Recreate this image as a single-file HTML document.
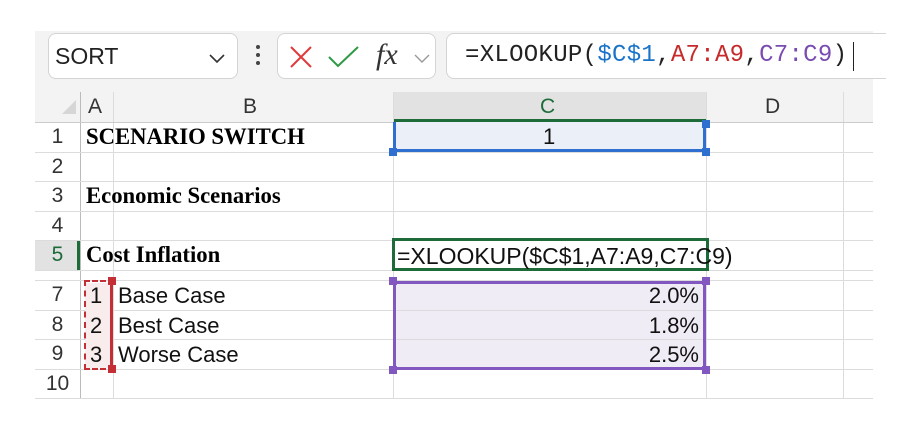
<!DOCTYPE html>
<html><head><style>
*{margin:0;padding:0;box-sizing:border-box}
body{width:910px;height:430px;background:#fff;position:relative;overflow:hidden;font-family:"Liberation Sans",Arial,sans-serif}
.a{position:absolute}
.tb{left:35px;top:31px;width:838px;height:61px;background:#f3f3f3}
.box{background:#fff;border:1px solid #d4d4d4;border-radius:8px}
.hl{position:absolute;height:1px;background:#dcdcdc}
.vl{position:absolute;width:1px;background:#dcdcdc}
.rn{position:absolute;left:35px;width:45px;text-align:center;font-size:21px;color:#333}
.ser{font-family:"Liberation Serif",serif;font-weight:bold;font-size:22.7px;color:#000}
.t{position:absolute;font-size:22px;color:#111}
.h{position:absolute;width:8px;height:8px}
</style></head><body>
<div class="a tb"></div>
<div class="a box" style="left:48px;top:33px;width:190px;height:46px"></div>
<div class="a" style="left:55px;top:43px;font-size:23px;color:#222">SORT</div>
<svg class="a" style="left:208px;top:52px" width="18" height="12"><path d="M2 3 L9 10 L16 3" stroke="#333" stroke-width="1.6" fill="none"/></svg>
<div class="a" style="left:256px;top:45px;width:4px;height:4px;background:#444;border-radius:2px"></div>
<div class="a" style="left:256px;top:53px;width:4px;height:4px;background:#444;border-radius:2px"></div>
<div class="a" style="left:256px;top:61px;width:4px;height:4px;background:#444;border-radius:2px"></div>
<div class="a box" style="left:277px;top:33px;width:159px;height:46px"></div>
<svg class="a" style="left:287px;top:44px" width="28" height="26"><path d="M4 3 L24 23 M24 3 L4 23" stroke="#e03a3a" stroke-width="2" fill="none"/></svg>
<svg class="a" style="left:326px;top:44px" width="36" height="26"><path d="M3 13 L12 22 L32 3" stroke="#2e9a46" stroke-width="2" fill="none"/></svg>
<div class="a" style="left:376px;top:38px;font-family:'Liberation Serif',serif;font-style:italic;font-size:30px;color:#333">fx</div>
<svg class="a" style="left:413px;top:52px" width="18" height="12"><path d="M2 3 L9 10 L16 3" stroke="#999" stroke-width="1.4" fill="none"/></svg>
<div class="a box" style="left:446px;top:33px;width:440px;height:46px;border-right:none;border-radius:8px 0 0 8px"></div>
<div class="a" style="left:465px;top:42px;font-family:'Liberation Mono',monospace;font-size:24px;color:#222;letter-spacing:0.3px">=XLOOKUP(<span style="color:#1a73c8">$C$1</span>,<span style="color:#c62a2a">A7:A9</span>,<span style="color:#7a4bb0">C7:C9</span>)</div>
<div class="a" style="left:853px;top:42px;width:1px;height:29px;background:#222"></div>
<div class="a" style="left:35px;top:92px;width:838px;height:30px;background:#f3f3f3"></div>
<div class="a" style="left:393px;top:92px;width:313px;height:30px;background:#e2e2e2"></div>
<div class="a" style="left:393px;top:119px;width:313px;height:3px;background:#1e6b3a"></div>
<svg class="a" style="left:60px;top:98px" width="18" height="18"><path d="M16 2 L16 16 L2 16 Z" fill="#d6d6d6"/></svg>
<div class="a" style="left:88px;top:95px;font-size:21px;color:#333">A</div>
<div class="a" style="left:243px;top:95px;font-size:21px;color:#333">B</div>
<div class="a" style="left:540px;top:95px;font-size:21px;color:#1e6b3a">C</div>
<div class="a" style="left:765px;top:95px;font-size:21px;color:#333">D</div>
<div class="a" style="left:35px;top:240px;width:45px;height:30px;background:#e2e2e2"></div>
<div class="a" style="left:77px;top:240px;width:3px;height:30px;background:#1e6b3a"></div>
<div class="vl" style="left:80px;top:92px;height:306px;background:#bbb"></div>
<div class="vl" style="left:113px;top:92px;height:306px"></div>
<div class="vl" style="left:393px;top:92px;height:306px"></div>
<div class="vl" style="left:706px;top:92px;height:306px"></div>
<div class="vl" style="left:843px;top:92px;height:306px"></div>
<div class="hl" style="left:35px;top:122px;width:838px;background:#ccc"></div>
<div class="hl" style="left:35px;top:152px;width:838px"></div>
<div class="hl" style="left:35px;top:181px;width:838px"></div>
<div class="hl" style="left:35px;top:211px;width:838px"></div>
<div class="hl" style="left:35px;top:240px;width:838px"></div>
<div class="hl" style="left:35px;top:270px;width:838px"></div>
<div class="hl" style="left:35px;top:280px;width:838px"></div>
<div class="hl" style="left:35px;top:310px;width:838px"></div>
<div class="hl" style="left:35px;top:339px;width:838px"></div>
<div class="hl" style="left:35px;top:369px;width:838px"></div>
<div class="hl" style="left:35px;top:398px;width:838px"></div>
<div class="rn" style="top:125px">1</div>
<div class="rn" style="top:155px">2</div>
<div class="rn" style="top:184px">3</div>
<div class="rn" style="top:214px">4</div>
<div class="rn" style="top:243px;color:#1e6b3a">5</div>
<div class="rn" style="top:283px">7</div>
<div class="rn" style="top:313px">8</div>
<div class="rn" style="top:342px">9</div>
<div class="rn" style="top:372px">10</div>
<div class="a ser" style="left:86px;top:124px">SCENARIO SWITCH</div>
<div class="a ser" style="left:86px;top:183px">Economic Scenarios</div>
<div class="a ser" style="left:86px;top:242px">Cost Inflation</div>
<div class="a" style="left:393px;top:122px;width:313px;height:30px;background:#eaeff8;border:3px solid #2f6fcf;border-top:0"></div>
<div class="t" style="left:543px;top:124px">1</div>
<div class="h" style="left:389px;top:148px;background:#2f6fcf"></div>
<div class="h" style="left:702px;top:148px;background:#2f6fcf"></div>
<div class="h" style="left:702px;top:120px;background:#2f6fcf"></div>
<div class="a" style="left:85px;top:283px;width:28px;height:85px;background:#f9ecec"></div>
<div class="a" style="left:84px;top:280px;width:30px;height:90px;border:2px dashed #c42f35;border-right:none"></div>
<div class="a" style="left:110px;top:280px;width:3px;height:90px;background:#c42f35"></div>
<div class="h" style="left:108px;top:277px;background:#c42f35"></div>
<div class="h" style="left:108px;top:365px;background:#c42f35"></div>
<div class="t" style="left:90px;top:283px">1</div>
<div class="t" style="left:90px;top:313px">2</div>
<div class="t" style="left:90px;top:342px">3</div>
<div class="t" style="left:118px;top:283px">Base Case</div>
<div class="t" style="left:118px;top:313px">Best Case</div>
<div class="t" style="left:118px;top:342px">Worse Case</div>
<div class="a" style="left:393px;top:281px;width:313px;height:89px;background:#efecf6;border:3px solid #8257c0"></div>
<div class="hl" style="left:396px;top:310px;width:307px"></div>
<div class="hl" style="left:396px;top:339px;width:307px"></div>
<div class="h" style="left:389px;top:277px;background:#8257c0"></div>
<div class="h" style="left:702px;top:277px;background:#8257c0"></div>
<div class="h" style="left:389px;top:366px;background:#8257c0"></div>
<div class="h" style="left:702px;top:366px;background:#8257c0"></div>
<div class="t" style="right:211px;top:283px">2.0%</div>
<div class="t" style="right:211px;top:313px">1.8%</div>
<div class="t" style="right:211px;top:342px">2.5%</div>
<div class="a" style="left:392px;top:238px;width:317px;height:33px;border:3px solid #1e6b3a"></div>
<div class="t" style="left:397px;top:243px;font-size:23px">=XLOOKUP($C$1,A7:A9,C7:C9)</div>
</body></html>
